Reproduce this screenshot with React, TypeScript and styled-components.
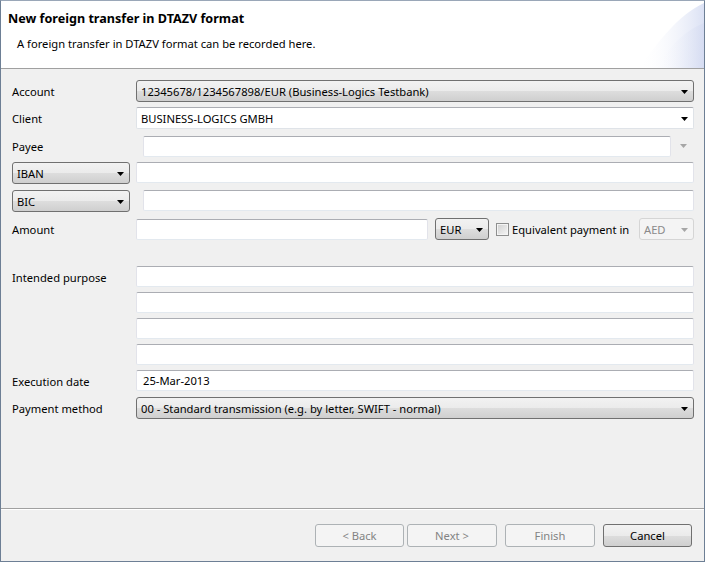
import React from 'react'
import styled, { createGlobalStyle } from 'styled-components'

const GlobalStyle = createGlobalStyle`
  body {
    margin: 0;
    background: #ffffff;
    font-family: "Noto Sans", "Liberation Sans", sans-serif;
    font-size: 11.2px;
    color: #000;
  }
`

const Window = styled.div`
  width: 705px;
  height: 562px;
  box-sizing: border-box;
  border: 1px solid #6d7f95;
  border-top-color: #9aa7b8;
  background: #f0f0f0;
  display: flex;
  flex-direction: column;
`

const Header = styled.div`
  position: relative;
  height: 67px;
  background: #ffffff;
  border-bottom: 1px solid #a0a0a0;
  overflow: hidden;
`

const Title = styled.div`
  font-weight: bold;
  font-size: 12.6px;
  padding: 10px 0 0 7px;
  line-height: 16px;
`

const Subtitle = styled.div`
  padding: 9px 0 0 16px;
  line-height: 16px;
`

const Swoosh = styled.svg`
  position: absolute;
  right: 0;
  top: 0;
`

const Form = styled.div`
  flex: 1;
  padding: 11px 10px 0 11px;
  display: flex;
  flex-direction: column;
`

const Row = styled.div<{ $mt?: number }>`
  display: grid;
  grid-template-columns: 124px 1fr;
  align-items: start;
  margin-top: ${p => p.$mt ?? 0}px;
`

const Label = styled.div<{ $h?: number }>`
  box-sizing: border-box;
  height: ${p => p.$h ?? 22}px;
  padding-top: 1px;
  line-height: ${p => p.$h ?? 22}px;
  white-space: nowrap;
`

const Field = styled.div<{ $h?: number, $indent?: number, $w?: number }>`
  box-sizing: border-box;
  height: ${p => p.$h ?? 22}px;
  line-height: ${p => (p.$h ?? 22) - 2}px;
  margin-left: ${p => p.$indent ?? 0}px;
  ${p => p.$w ? `width: ${p.$w}px; flex: none;` : 'flex: 1 0 auto;'}
  background: #ffffff;
  border: 1px solid #e2e3ea;
  border-top-color: #abadb3;
  border-bottom-color: #e3e9ef;
  border-radius: 2px;
  padding: 0 6px;
  white-space: nowrap;
`

const Combo = styled.div<{ $editable?: boolean, $disabled?: boolean, $w?: number, $ml?: number }>`
  box-sizing: border-box;
  height: 22px;
  ${p => p.$w ? `width: ${p.$w}px; flex: none;` : 'flex: 1;'}
  margin-left: ${p => p.$ml ?? 0}px;
  display: flex;
  align-items: center;
  justify-content: space-between;
  padding: 1px 5px 0 4px;
  border-radius: 3px;
  white-space: nowrap;
  color: ${p => p.$disabled ? '#8a8a8a' : '#000'};
  border: 1px solid ${p => p.$editable ? '#dfe3e8' : p.$disabled ? '#d5d5d5' : '#707070'};
  ${p => p.$editable
    ? 'border-top-color: #abadb3; border-radius: 2px; background: #fff;'
    : p.$disabled
      ? 'background: #f4f4f4;'
      : 'background: linear-gradient(#f2f2f2 0%, #ebebeb 50%, #dddddd 51%, #cfcfcf 100%);'}
`

const Line = styled.div`
  display: flex;
  align-items: center;
`

const Stack = styled.div`
  display: flex;
  flex-direction: column;
  gap: 5px;
`

const ArrowSlot = styled.div`
  width: 22px;
  height: 22px;
  display: flex;
  align-items: center;
  justify-content: center;
  flex: none;
  padding-left: 1px;
`

const CheckBox = styled.div`
  box-sizing: border-box;
  width: 13px;
  height: 13px;
  margin: 0 3px 0 7px;
  border: 1px solid #8e8f8f;
  background: linear-gradient(135deg, #cfcfcf, #f6f6f6);
  box-shadow: inset 0 0 0 1px #f4f4f4;
  flex: none;
`

const CheckLabel = styled.span`
  flex: 1;
  padding-top: 1px;
  white-space: nowrap;
`

const Footer = styled.div`
  border-top: 1px solid #a0a0a0;
  box-shadow: inset 0 1px 0 #ffffff;
  padding: 15px 12px 14px 0;
  display: flex;
  justify-content: flex-end;
`

const Button = styled.div<{ $disabled?: boolean, $gap?: number, $w?: number }>`
  box-sizing: border-box;
  width: ${p => p.$w ?? 89}px;
  height: 23px;
  margin-left: ${p => p.$gap ?? 0}px;
  display: flex;
  align-items: center;
  justify-content: center;
  border-radius: 3px;
  border: 1px solid ${p => p.$disabled ? '#adb2b5' : '#707070'};
  color: ${p => p.$disabled ? '#838383' : '#000'};
  background: ${p => p.$disabled
    ? '#f4f4f4'
    : 'linear-gradient(#f2f2f2 0%, #ebebeb 50%, #dddddd 51%, #cfcfcf 100%)'};
`

const Arrow = ({ color = '#000' }: { color?: string }): JSX.Element => (
  <svg width="7" height="4" viewBox="0 0 7 4">
    <polygon points="0,0 7,0 3.5,4" fill={color} />
  </svg>
)

const App = (): JSX.Element => {
  return (
    <>
      <GlobalStyle />
      <Window>
        <Header>
          <Title>New foreign transfer in DTAZV format</Title>
          <Subtitle>A foreign transfer in DTAZV format can be recorded here.</Subtitle>
          <Swoosh width="90" height="67" viewBox="0 0 90 67">
            <defs>
              <linearGradient id="sw1" x1="0" y1="0" x2="1" y2="0">
                <stop offset="0" stopColor="#ffffff" stopOpacity="0" />
                <stop offset="1" stopColor="#dbe1f4" />
              </linearGradient>
              <linearGradient id="sw2" x1="0" y1="0" x2="1" y2="0">
                <stop offset="0" stopColor="#ffffff" stopOpacity="0" />
                <stop offset="1" stopColor="#d3daf1" />
              </linearGradient>
            </defs>
            <path d="M25 67 C 45 40, 64 14, 90 2 L 90 67 Z" fill="url(#sw1)" />
            <path d="M42 67 C 56 45, 70 30, 90 22 L 90 67 Z" fill="url(#sw2)" opacity="0.7" />
          </Swoosh>
        </Header>
        <Form>
          <Row>
            <Label>Account</Label>
            <Combo>12345678/1234567898/EUR (Business-Logics Testbank)<Arrow /></Combo>
          </Row>
          <Row $mt={5}>
            <Label>Client</Label>
            <Combo $editable>BUSINESS-LOGICS GMBH<Arrow /></Combo>
          </Row>
          <Row $mt={6}>
            <Label>Payee</Label>
            <Line>
              <Field $indent={7} $h={21} />
              <ArrowSlot><Arrow color="#a6a6a6" /></ArrowSlot>
            </Line>
          </Row>
          <Row $mt={5}>
            <Line><Combo $w={118}>IBAN<Arrow /></Combo></Line>
            <Field $h={21} />
          </Row>
          <Row $mt={6}>
            <Line><Combo $w={118}>BIC<Arrow /></Combo></Line>
            <Line><Field $indent={7} $h={21} /></Line>
          </Row>
          <Row $mt={6}>
            <Label>Amount</Label>
            <Line>
              <Field $w={292} $h={21} />
              <Combo $w={54} $ml={7}>EUR<Arrow /></Combo>
              <CheckBox />
              <CheckLabel>Equivalent payment in</CheckLabel>
              <Combo $w={55} $disabled>AED<Arrow color="#a6a6a6" /></Combo>
            </Line>
          </Row>
          <Row $mt={26}>
            <Label $h={21}>Intended purpose</Label>
            <Stack>
              <Field $h={21} />
              <Field $h={21} />
              <Field $h={21} />
              <Field $h={21} />
            </Stack>
          </Row>
          <Row $mt={5}>
            <Label $h={21}>Execution date</Label>
            <Field $h={21}>25-Mar-2013</Field>
          </Row>
          <Row $mt={6}>
            <Label>Payment method</Label>
            <Combo>00 - Standard transmission (e.g. by letter, SWIFT - normal)<Arrow /></Combo>
          </Row>
        </Form>
        <Footer>
          <Button $disabled>&lt; Back</Button>
          <Button $disabled $gap={3} $w={90}>Next &gt;</Button>
          <Button $disabled $gap={8} $w={90}>Finish</Button>
          <Button $gap={8}>Cancel</Button>
        </Footer>
      </Window>
    </>
  )
}

export default App
